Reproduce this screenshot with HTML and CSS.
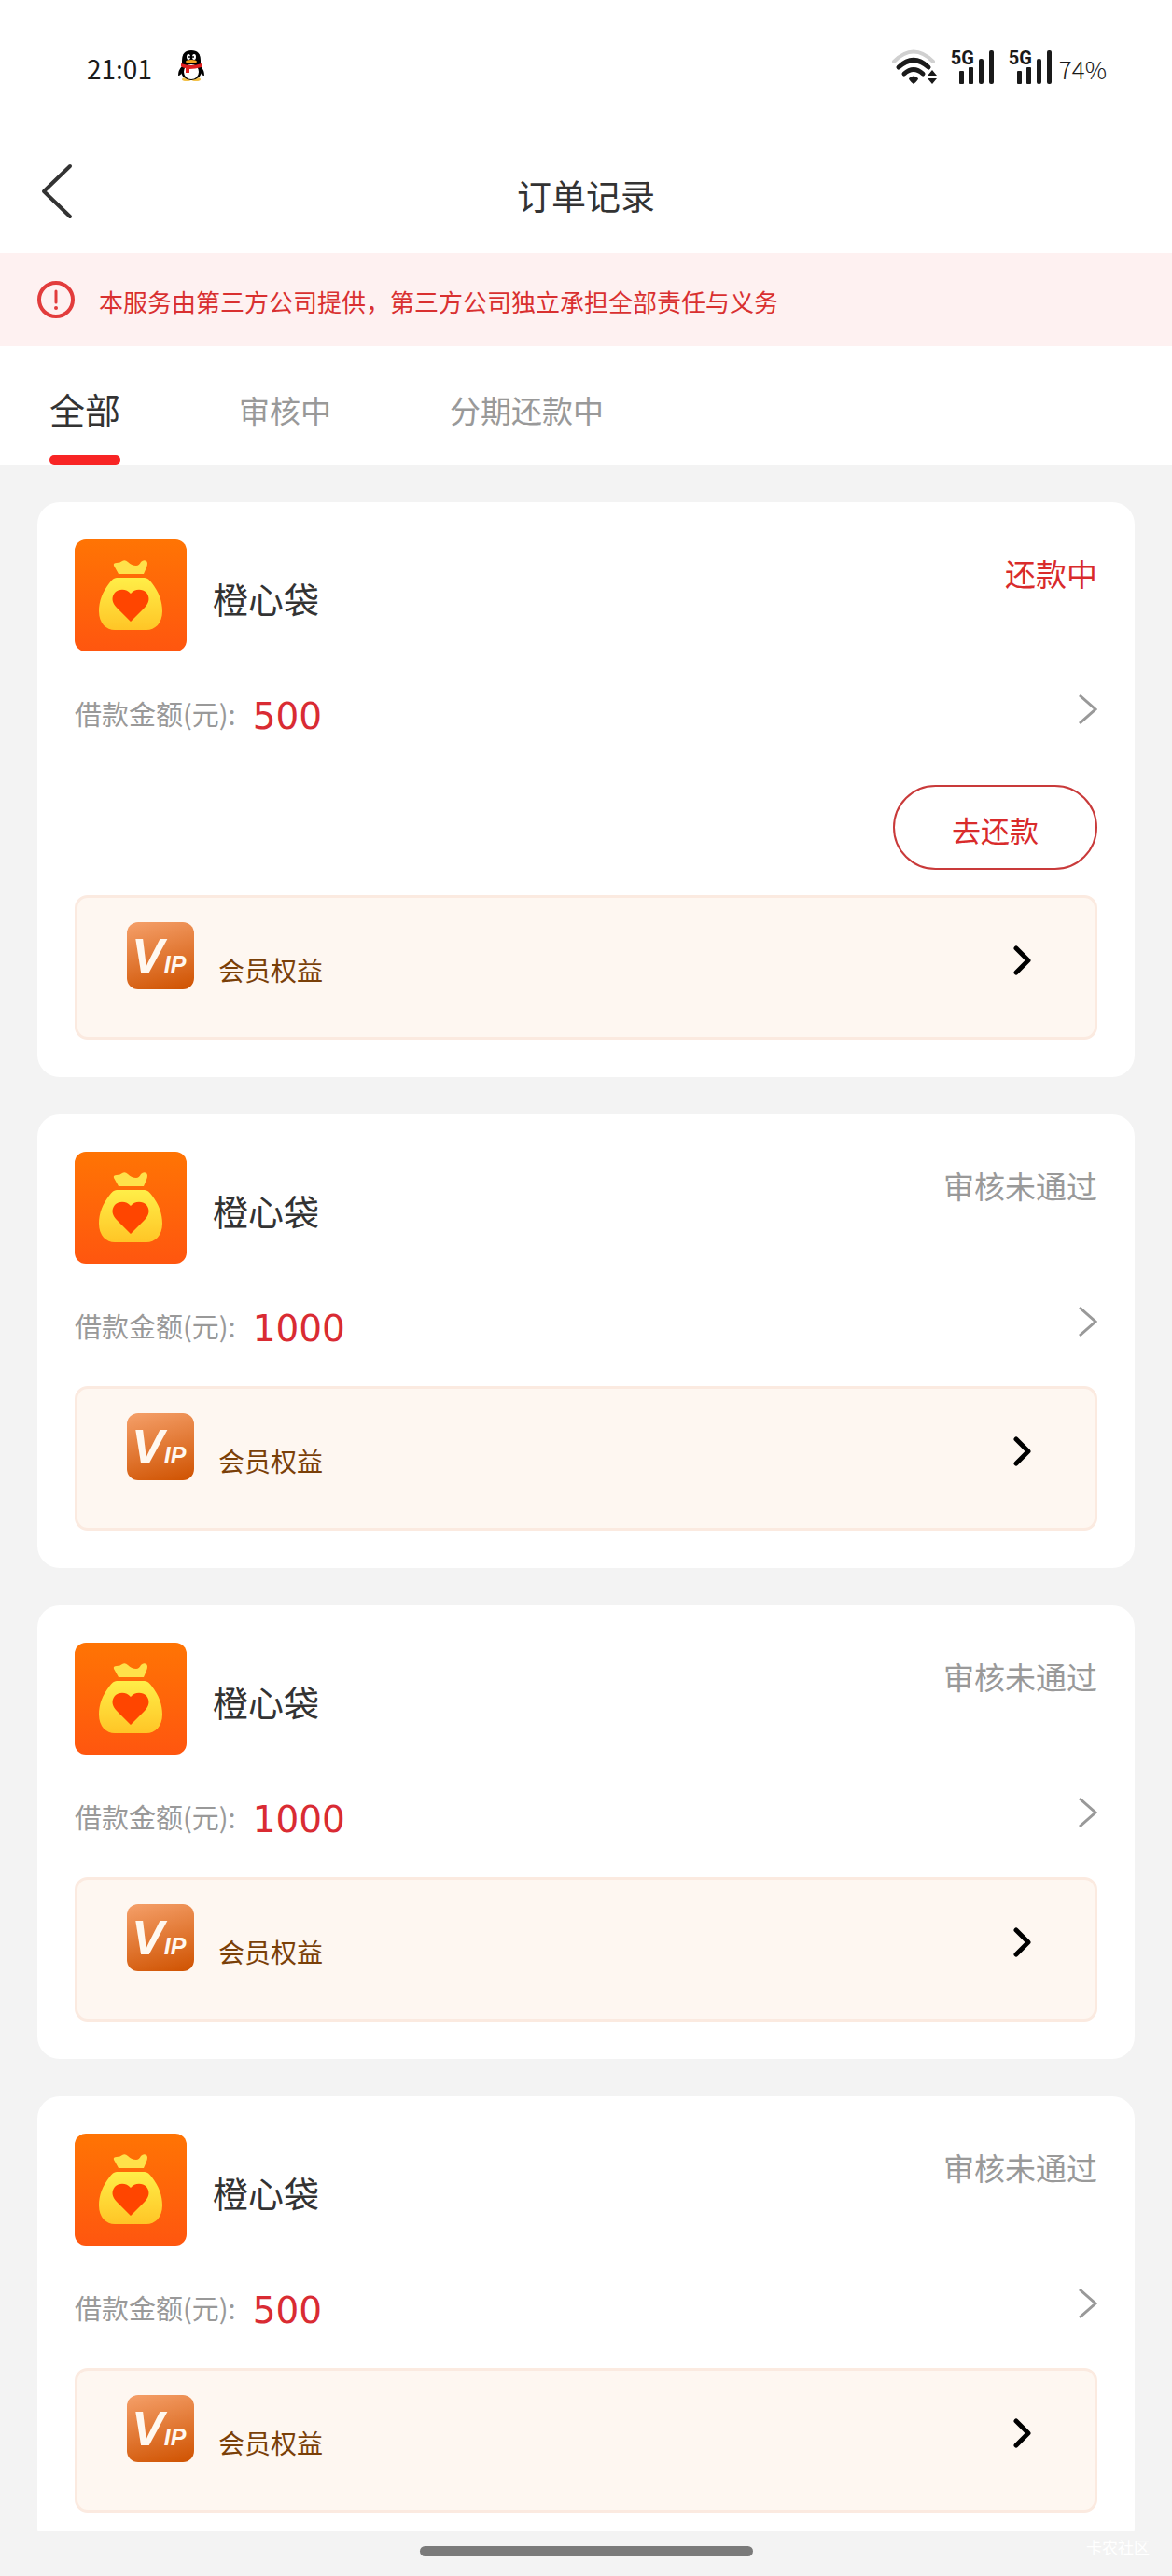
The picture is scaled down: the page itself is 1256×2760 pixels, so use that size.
FILE: index.html
```
<!DOCTYPE html>
<html lang="zh-CN">
<head>
    <meta charset="utf-8">
    <meta name="viewport" content="width=device-width, initial-scale=1">
    <title>订单记录</title>
    <link rel="stylesheet" href="styles.css">
</head>

<body>
    <!-- shared icons -->
    <svg class="sprite" aria-hidden="true">
        <defs>
            <linearGradient id="orange" x1="0" y1="0" x2="0" y2="1">
                <stop offset="0" stop-color="#ff7404"/>
                <stop offset="1" stop-color="#ff560f"/>
            </linearGradient>
            <linearGradient id="gold" x1="0" y1="0" x2="0" y2="1">
                <stop offset="0" stop-color="#ffee48"/>
                <stop offset="1" stop-color="#ffc526"/>
            </linearGradient>
        </defs>
        <symbol id="bag" viewBox="0 0 120 120">
            <rect width="120" height="120" rx="12" fill="url(#orange)"/>
            <path fill="#ffe14a" d="M47 37L42 28Q41 25 45 25Q49 25 51 23Q54 21 57 24Q61 28 66 28Q69 28 71 24Q74 21 77 23Q79 25 77 30L74 37Z"/>
            <path fill="url(#gold)" d="M45 41H75Q79 41 83 47C90 56 94 66 94 77C94 90 86 97 77 97H43C34 97 26 90 26 77C26 66 30 56 37 47Q41 41 45 41Z"/>
            <path fill="#ff4500" d="M60 88L45 73C40 68 39 62 43 57C48 52 56 53 60 58C64 53 72 52 77 57C81 62 80 68 75 73Z"/>
        </symbol>
        <symbol id="bars" viewBox="0 0 48 38">
            <g fill="#1a1a1a">
                <rect x="9" y="23" width="5" height="14" rx="1"/>
                <rect x="19" y="19" width="5" height="18" rx="1"/>
                <rect x="30" y="10" width="5" height="27" rx="2"/>
                <rect x="41" y="1" width="5" height="36" rx="2"/>
            </g>
        </symbol>
        <symbol id="arrow" viewBox="0 0 20 32">
            <path d="M1 1L18 16L1 31" fill="none" stroke="#999" stroke-width="3"/>
        </symbol>
        <symbol id="arrow-bold" viewBox="0 0 20 32">
            <path d="M3 3L16 16L3 29" fill="none" stroke="#000" stroke-width="5" stroke-linecap="round" stroke-linejoin="round"/>
        </symbol>
    </svg>

    <div class="app">
        <div class="status-bar">
            <span class="time">21:01</span>
            <svg class="penguin" viewBox="0 0 28 34" aria-hidden="true">
                <ellipse cx="9" cy="31" rx="5" ry="2" fill="#f2c14a"/>
                <ellipse cx="19" cy="31" rx="5" ry="2" fill="#f2c14a"/>
                <path d="M4 17Q0 21 0 27Q3 27 5 22ZM24 17Q28 21 28 27Q25 27 23 22Z" fill="#000"/>
                <ellipse cx="14" cy="22" rx="11" ry="10" fill="#000"/>
                <path d="M4 15V11Q4 0 14 0Q24 0 24 11V15Z" fill="#000"/>
                <ellipse cx="14" cy="23" rx="8" ry="8" fill="#fff"/>
                <ellipse cx="11" cy="7" rx="2" ry="3" fill="#fff"/>
                <ellipse cx="17" cy="7" rx="2" ry="3" fill="#fff"/>
                <circle cx="12" cy="7" r="1" fill="#000"/>
                <circle cx="16" cy="7" r="1" fill="#000"/>
                <ellipse cx="14" cy="12" rx="6" ry="2" fill="#f5a623"/>
                <path d="M3 14Q14 18 25 14V18Q18 20 12 20V24H8V19Q5 19 3 17Z" fill="#e02020"/>
            </svg>
            <div class="status-right">
                <svg class="wifi" viewBox="0 0 50 38" aria-hidden="true">
                    <g fill="none" stroke-linecap="round" stroke="#1a1a1a" stroke-width="4">
                        <path d="M3 13Q24 -8 45 13" stroke="#d0d0d0"/>
                        <path d="M8 19Q24 4 40 19" stroke-width="5"/>
                        <path d="M14 26Q24 17 34 26" stroke-width="5"/>
                    </g>
                    <path d="M19 31Q24 26 29 31Q29 33 24 37Q19 33 19 31Z" fill="#1a1a1a"/>
                    <path d="M44 22L49 28H39ZM44 37L39 31H49Z" fill="#1a1a1a"/>
                </svg>
                <div class="signal">
                    <svg aria-hidden="true"><use href="#bars"/></svg>
                    <span>5G</span>
                </div>
                <div class="signal">
                    <svg aria-hidden="true"><use href="#bars"/></svg>
                    <span>5G</span>
                </div>
                <span class="battery">74%</span>
            </div>
        </div>

        <header class="header">
            <button class="back" type="button" aria-label="返回">
                <svg viewBox="0 0 34 60"><path d="M31 3L3 30L31 57" fill="none" stroke="#333" stroke-width="4" stroke-linecap="round" stroke-linejoin="round"/></svg>
            </button>
            <h1>订单记录</h1>
        </header>

        <div class="notice">
            <svg viewBox="0 0 40 40" aria-hidden="true">
                <circle cx="20" cy="20" r="18" fill="none" stroke="#e23c3c" stroke-width="4"/>
                <path d="M20 11V23" stroke="#e23c3c" stroke-width="3" stroke-linecap="round"/>
                <circle cx="20" cy="29" r="2" fill="#e23c3c"/>
            </svg>
            <p>本服务由第三方公司提供，第三方公司独立承担全部责任与义务</p>
        </div>

        <nav class="tabs">
            <button class="tab active" type="button">全部</button>
            <button class="tab" type="button">审核中</button>
            <button class="tab" type="button">分期还款中</button>
        </nav>

        <main class="list">
            <section class="card">
                <div class="card-head">
                    <svg class="logo" aria-hidden="true"><use href="#bag"/></svg>
                    <h2>橙心袋</h2>
                    <span class="state repaying">还款中</span>
                </div>
                <div class="amount-row">
                    <span class="label">借款金额(元):</span>
                    <span class="amount">500</span>
                    <svg class="arrow" aria-hidden="true"><use href="#arrow"/></svg>
                </div>
                <div class="action">
                    <button class="repay" type="button">去还款</button>
                </div>
                <a class="member" href="#">
                    <span class="vip"><b>V</b><i>IP</i></span>
                    <span class="member-text">会员权益</span>
                    <svg class="arrow-bold" aria-hidden="true"><use href="#arrow-bold"/></svg>
                </a>
            </section>

            <section class="card">
                <div class="card-head">
                    <svg class="logo" aria-hidden="true"><use href="#bag"/></svg>
                    <h2>橙心袋</h2>
                    <span class="state">审核未通过</span>
                </div>
                <div class="amount-row">
                    <span class="label">借款金额(元):</span>
                    <span class="amount">1000</span>
                    <svg class="arrow" aria-hidden="true"><use href="#arrow"/></svg>
                </div>
                <a class="member" href="#">
                    <span class="vip"><b>V</b><i>IP</i></span>
                    <span class="member-text">会员权益</span>
                    <svg class="arrow-bold" aria-hidden="true"><use href="#arrow-bold"/></svg>
                </a>
            </section>

            <section class="card">
                <div class="card-head">
                    <svg class="logo" aria-hidden="true"><use href="#bag"/></svg>
                    <h2>橙心袋</h2>
                    <span class="state">审核未通过</span>
                </div>
                <div class="amount-row">
                    <span class="label">借款金额(元):</span>
                    <span class="amount">1000</span>
                    <svg class="arrow" aria-hidden="true"><use href="#arrow"/></svg>
                </div>
                <a class="member" href="#">
                    <span class="vip"><b>V</b><i>IP</i></span>
                    <span class="member-text">会员权益</span>
                    <svg class="arrow-bold" aria-hidden="true"><use href="#arrow-bold"/></svg>
                </a>
            </section>

            <section class="card">
                <div class="card-head">
                    <svg class="logo" aria-hidden="true"><use href="#bag"/></svg>
                    <h2>橙心袋</h2>
                    <span class="state">审核未通过</span>
                </div>
                <div class="amount-row">
                    <span class="label">借款金额(元):</span>
                    <span class="amount">500</span>
                    <svg class="arrow" aria-hidden="true"><use href="#arrow"/></svg>
                </div>
                <a class="member" href="#">
                    <span class="vip"><b>V</b><i>IP</i></span>
                    <span class="member-text">会员权益</span>
                    <svg class="arrow-bold" aria-hidden="true"><use href="#arrow-bold"/></svg>
                </a>
            </section>
        </main>

        <footer class="home-bar">
            <div class="handle"></div>
            <span class="watermark">卡农社区</span>
        </footer>
    </div>
</body>

</html>
```

FILE: styles.css
```
* {
    box-sizing: border-box;
}

body {
    margin: 0;
    background-color: #f3f3f3;
    color: #333;
    font-family: "Noto Sans CJK SC", sans-serif;
}

h1, h2, p {
    margin: 0;
    font-weight: normal;
}

button {
    padding: 0;
    border: none;
    background: none;
    color: inherit;
    font-family: inherit;
    cursor: pointer;
}

svg {
    display: block;
    flex-shrink: 0;
}

.sprite {
    position: absolute;
    width: 0;
    height: 0;
}

.app {
    display: flex;
    flex-direction: column;
    height: 100vh;
}

/* status bar */
.status-bar {
    display: flex;
    align-items: center;
    height: 144px;
    padding: 2px 70px 0 93px;
    background-color: #fff;
    color: #1a1a1a;
}

.time {
    font-size: 28px;
}

.penguin {
    width: 28px;
    height: 34px;
    margin-left: 28px;
    margin-bottom: 4px;
}

.status-right {
    display: flex;
    align-items: center;
    gap: 14px;
    margin-left: auto;
}

.wifi {
    width: 50px;
    height: 38px;
    margin-bottom: 2px;
}

.signal {
    position: relative;
    margin-bottom: 2px;
}

.signal svg {
    width: 48px;
    height: 38px;
}

/* network type sits over the short bars */
.signal span {
    position: absolute;
    left: 0;
    top: -1px;
    font-family: Roboto, sans-serif;
    font-size: 20px;
    font-weight: bold;
    line-height: 20px;
}

.battery {
    margin-left: -8px;
    font-size: 26px;
    font-weight: 300;
}

/* title */
.header {
    position: relative;
    display: flex;
    align-items: center;
    justify-content: center;
    height: 127px;
    background-color: #fff;
}

.header h1 {
    padding-top: 2px;
    font-size: 37px;
}

.back {
    position: absolute;
    left: 44px;
    top: 31px;
}

.back svg {
    width: 34px;
    height: 60px;
}

.notice {
    display: flex;
    align-items: center;
    gap: 26px;
    min-height: 100px;
    padding: 0 40px;
    background-color: #fef1f1;
    color: #d93030;
    font-size: 26px;
}

.notice svg {
    width: 40px;
    height: 40px;
}

.notice p {
    padding-top: 3px;
}

/* tabs */
.tabs {
    display: flex;
    gap: 127px;
    height: 127px;
    padding: 0 53px;
    background-color: #fff;
}

.tab {
    position: relative;
    padding-top: 8px;
    color: #999;
    font-size: 33px;
}

.tab.active {
    padding-top: 6px;
    color: #333;
    font-size: 38px;
}

.tab.active::after {
    content: "";
    position: absolute;
    left: 0;
    right: 0;
    bottom: 0;
    height: 10px;
    border-radius: 5px;
    background-color: #f82424;
}

/* orders */
.list {
    display: flex;
    flex: 1;
    flex-direction: column;
    gap: 40px;
    min-height: 0;
    padding: 40px;
    overflow-y: auto;
    scrollbar-width: none;
}

.card {
    flex-shrink: 0;
    padding: 40px;
    border-radius: 24px;
    background-color: #fff;
}

.card-head {
    display: flex;
    align-items: center;
    gap: 28px;
}

.logo {
    width: 120px;
    height: 120px;
}

.card-head h2 {
    padding-top: 5px;
    font-size: 38px;
}

.state {
    align-self: flex-start;
    margin-left: auto;
    color: #999;
    font-size: 33px;
    line-height: 72px;
}

.state.repaying {
    color: #d92b2b;
}

.amount-row {
    display: flex;
    align-items: center;
    height: 131px;
}

.label {
    color: #999;
    font-size: 29px;
}

.amount {
    margin-left: 18px;
    padding-top: 8px;
    color: #d92b33;
    font-family: "DejaVu Sans", sans-serif;
    font-size: 39px;
}

.arrow {
    width: 20px;
    height: 32px;
    margin-left: auto;
    margin-bottom: 8px;
}

.action {
    display: flex;
    justify-content: flex-end;
    padding: 12px 0 27px;
}

.repay {
    width: 219px;
    height: 91px;
    padding-top: 3px;
    border: 2px solid #c93a3a;
    border-radius: 46px;
    color: #d92b2b;
    font-size: 31px;
}

.member {
    display: flex;
    align-items: flex-start;
    padding: 26px 67px 20px 53px;
    border: 3px solid #fbeae0;
    border-radius: 14px;
    background-color: #fef7f1;
    color: #7a4008;
    font-size: 28px;
    line-height: 103px;
    text-decoration: none;
}

.member-text {
    margin-left: 26px;
}

.vip {
    display: flex;
    align-items: baseline;
    width: 72px;
    height: 72px;
    padding-left: 5px;
    border-radius: 12px;
    background: linear-gradient(165deg, #f5a06a, #cf5200);
    color: #fff8f0;
    font-family: "Liberation Sans", sans-serif;
    font-style: italic;
    font-weight: bold;
    line-height: 72px;
}

.vip b {
    font-size: 52px;
}

.vip i {
    font-size: 25px;
}

.arrow-bold {
    width: 20px;
    height: 32px;
    margin-top: 25px;
    margin-left: auto;
}

/* bottom gesture bar */
.home-bar {
    position: relative;
    display: flex;
    align-items: center;
    justify-content: center;
    flex-shrink: 0;
    height: 48px;
    padding-bottom: 5px;
}

.handle {
    width: 357px;
    height: 11px;
    border-radius: 6px;
    background-color: #7a7a7a;
}

.watermark {
    position: absolute;
    right: 24px;
    top: 4px;
    color: #fff;
    font-size: 17px;
}
```
